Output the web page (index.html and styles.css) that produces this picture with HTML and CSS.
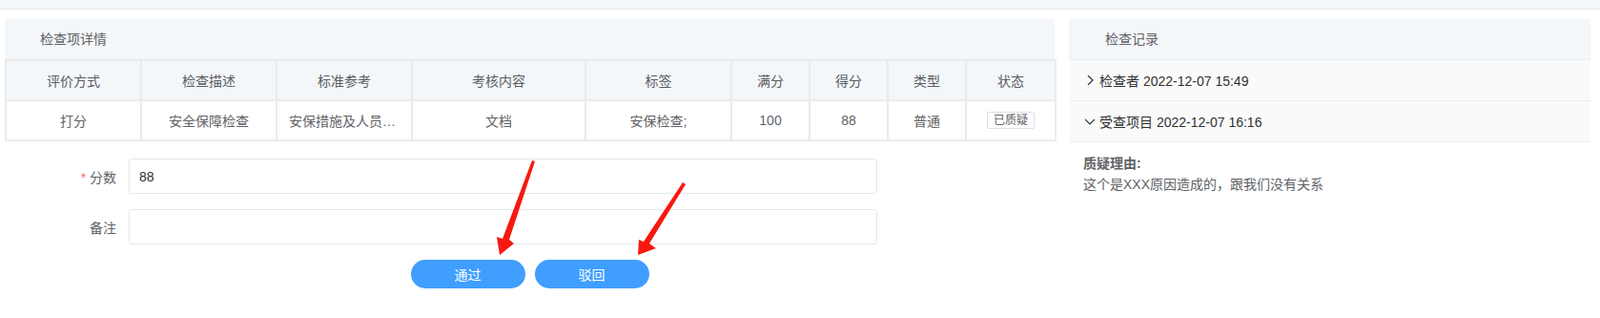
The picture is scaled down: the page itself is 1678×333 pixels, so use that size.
FILE: index.html
```html
<!DOCTYPE html>
<html>
<head>
<meta charset="utf-8">
<link rel="stylesheet" href="styles.css">
</head>
<body>
<div class="topbar"></div>
<div class="main">
  <div class="left">
    <div class="card">
      <div class="card-title">检查项详情</div>
      <table class="detail">
        <colgroup>
          <col style="width:142px"><col style="width:142px"><col style="width:142px">
          <col style="width:182px"><col style="width:153px"><col style="width:82px">
          <col style="width:82px"><col style="width:82px"><col style="width:94px">
        </colgroup>
        <tr>
          <th>评价方式</th><th>检查描述</th><th>标准参考</th><th>考核内容</th><th>标签</th>
          <th>满分</th><th>得分</th><th>类型</th><th>状态</th>
        </tr>
        <tr>
          <td>打分</td>
          <td>安全保障检查</td>
          <td class="ellipsis">安保措施及人员配置情况</td>
          <td>文档</td>
          <td>安保检查;</td>
          <td>100</td>
          <td>88</td>
          <td>普通</td>
          <td><span class="tag">已质疑</span></td>
        </tr>
      </table>
    </div>

    <div class="form">
      <div class="form-item">
        <label class="form-label"><span class="req">*</span> 分数</label>
        <input class="form-input" type="text" value="88">
      </div>
      <div class="form-item">
        <label class="form-label">备注</label>
        <input class="form-input" type="text">
      </div>
      <div class="btns">
        <button class="btn">通过</button>
        <button class="btn">驳回</button>
      </div>
    </div>
  </div>

  <div class="right">
    <div class="card-title right-title">检查记录</div>
    <div class="record">
      <svg class="chev" width="10" height="10" viewBox="0 0 10 10"><polyline points="3,0 8,5 3,10" fill="none" stroke="#303133" stroke-width="1.2"/></svg>
      检查者 2022-12-07 15:49
    </div>
    <div class="record">
      <svg class="chev" width="10" height="10" viewBox="0 0 10 10"><polyline points="0,3 5,8 10,3" fill="none" stroke="#303133" stroke-width="1.2"/></svg>
      受查项目 2022-12-07 16:16
    </div>
    <div class="record-body">
      <div class="reason-title">质疑理由:</div>
      <div>这个是XXX原因造成的，跟我们没有关系</div>
    </div>
  </div>
</div>

<svg class="marks" width="1678" height="333" viewBox="0 0 1678 333">
  <polygon points="561,169 534,251 539,255 524,267 521,248 527,250 558,168" fill="#f8180f"/>
  <polygon points="719,193 681,255 688,260 669,267 670,251 675,253 716,191" fill="#f8180f"/>
</svg>
</body>
</html>
```

FILE: styles.css
```css
body {
  margin: 0;
  background: #fff;
  font-family: "Liberation Sans", "Noto Sans CJK SC", sans-serif;
  font-size: 14px;
  color: #606266;
  position: relative;
}

.topbar {
  height: 9px;
  background: #f4f7fa;
  border-bottom: 1px solid #e6e8eb;
}

.main {
  display: flex;
  gap: 15px;
  padding: 10px 10px 0 5px;
}

.left {
  width: 1101px;
}

.right {
  flex: 1;
}

.card-title {
  height: 42px;
  line-height: 42px;
  background: #f4f7fa;
  padding-left: 37px;
  color: #606266;
}

.right-title {
  padding-left: 38px;
  border-bottom: 1px solid #ebeef5;
}

.detail {
  width: 100%;
  table-layout: fixed;
  border-collapse: collapse;
  border: 2px solid #ebebeb;
}

.detail th,
.detail td {
  height: 40px;
  padding: 0 12px;
  text-align: center;
  border: 2px solid #ebebeb;
  white-space: nowrap;
  font-weight: normal;
  color: #606266;
}

.detail th {
  background: #f4f7fa;
  color: #5a5c61;
}

.detail td.ellipsis {
  overflow: hidden;
  text-overflow: ellipsis;
}

.tag {
  display: inline-block;
  height: 16px;
  line-height: 16px;
  padding: 0 6px;
  font-size: 12px;
  border: 1px solid #dcdfe6;
  border-radius: 2px;
  background: #fff;
}

.form {
  padding-top: 18px;
}

.form-item {
  display: flex;
  align-items: center;
  margin-bottom: 16px;
}

.form-label {
  width: 117px;
  padding-right: 13px;
  text-align: right;
  color: #606266;
}

.req {
  color: #f56c6c;
}

.form-input {
  width: 785px;
  height: 37px;
  box-sizing: border-box;
  border: 1px solid #e4e7ed;
  border-radius: 3px;
  padding: 0 10px;
  font-family: "Liberation Sans", "Noto Sans CJK SC", sans-serif;
  font-size: 14px;
  color: #303133;
  outline: none;
}

.btns {
  display: flex;
  justify-content: center;
  gap: 10px;
}

.btn {
  width: 120px;
  height: 30px;
  border: none;
  border-radius: 15px;
  background: #409eff;
  color: #fff;
  font-family: "Liberation Sans", "Noto Sans CJK SC", sans-serif;
  font-size: 14px;
}

.record {
  display: flex;
  align-items: center;
  gap: 5px;
  height: 42px;
  padding-left: 17px;
  background: #fafafa;
  border-bottom: 1px solid #ebeef5;
  color: #303133;
}

.record-body {
  padding: 11px 15px;
  line-height: 22px;
}

.reason-title {
  font-weight: bold;
}

.marks {
  position: absolute;
  left: 0;
  top: 0;
  pointer-events: none;
}
```
